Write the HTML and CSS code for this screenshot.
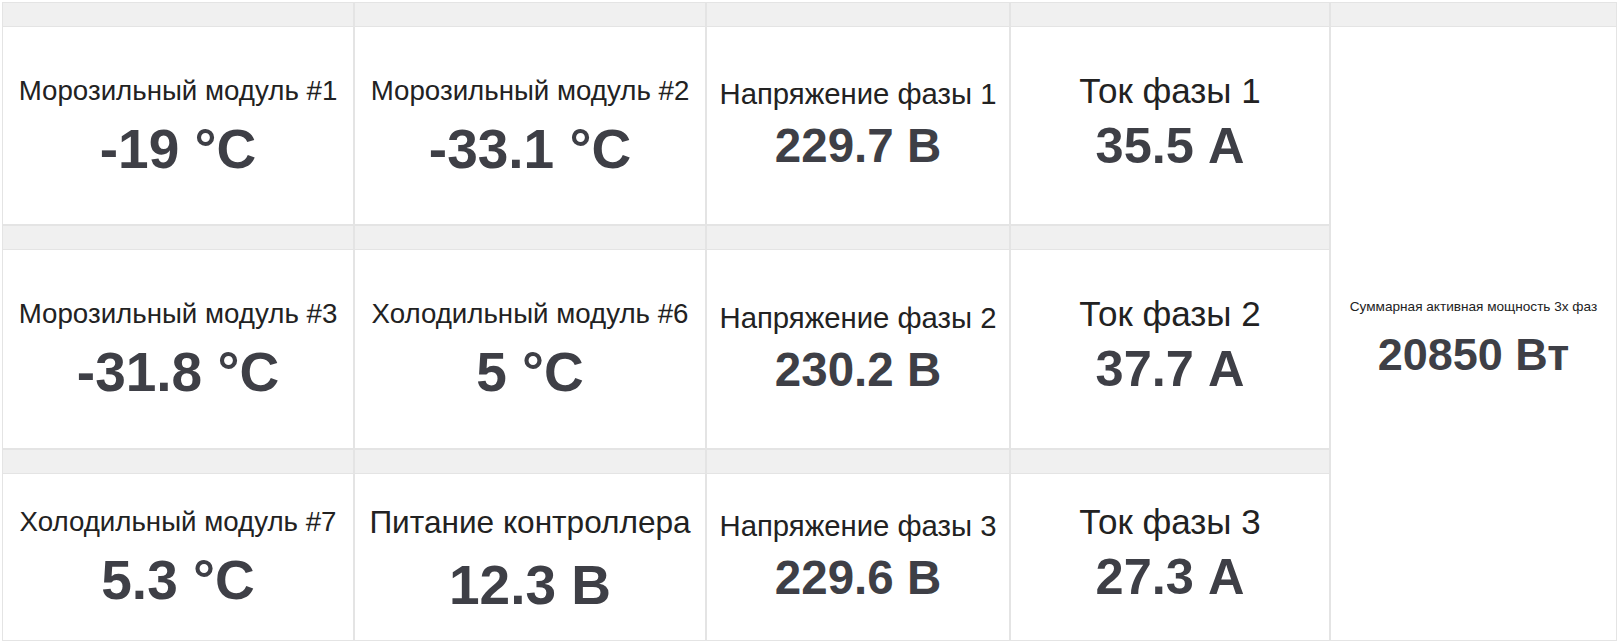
FILE: index.html
```html
<!DOCTYPE html>
<html lang="ru">
<head>
<meta charset="utf-8">
<title>Мониторинг</title>
<link rel="stylesheet" href="styles.css">
</head>
<body>
<div class="board">
  <div class="panel"><div class="panel-head"></div><div class="panel-body"><div class="lbl lbl-md">Морозильный модуль #1</div><div class="val val-xl">-19 °C</div></div></div>
  <div class="panel"><div class="panel-head"></div><div class="panel-body"><div class="lbl lbl-md">Морозильный модуль #2</div><div class="val val-xl">-33.1 °C</div></div></div>
  <div class="panel"><div class="panel-head"></div><div class="panel-body body-ph"><div class="lbl lbl-ph">Напряжение фазы 1</div><div class="val val-md">229.7 В</div></div></div>
  <div class="panel"><div class="panel-head"></div><div class="panel-body body-up"><div class="lbl lbl-lg">Ток фазы 1</div><div class="val val-lg">35.5 А</div></div></div>
  <div class="panel panel-tall"><div class="panel-head"></div><div class="panel-body body-sum"><div class="lbl lbl-sm">Суммарная активная мощность 3х фаз</div><div class="val val-sum">20850 Вт</div></div></div>

  <div class="panel"><div class="panel-head"></div><div class="panel-body"><div class="lbl lbl-md">Морозильный модуль #3</div><div class="val val-xl">-31.8 °C</div></div></div>
  <div class="panel"><div class="panel-head"></div><div class="panel-body"><div class="lbl lbl-md">Холодильный модуль #6</div><div class="val val-xl">5 °C</div></div></div>
  <div class="panel"><div class="panel-head"></div><div class="panel-body body-ph"><div class="lbl lbl-ph">Напряжение фазы 2</div><div class="val val-md">230.2 В</div></div></div>
  <div class="panel"><div class="panel-head"></div><div class="panel-body body-up"><div class="lbl lbl-lg">Ток фазы 2</div><div class="val val-lg">37.7 А</div></div></div>

  <div class="panel"><div class="panel-head"></div><div class="panel-body"><div class="lbl lbl-md">Холодильный модуль #7</div><div class="val val-xl">5.3 °C</div></div></div>
  <div class="panel"><div class="panel-head"></div><div class="panel-body body-pw"><div class="lbl lbl-xl">Питание контроллера</div><div class="val val-xl val-wide">12.3 В</div></div></div>
  <div class="panel"><div class="panel-head"></div><div class="panel-body body-ph"><div class="lbl lbl-ph">Напряжение фазы 3</div><div class="val val-md">229.6 В</div></div></div>
  <div class="panel"><div class="panel-head"></div><div class="panel-body body-up"><div class="lbl lbl-lg">Ток фазы 3</div><div class="val val-lg">27.3 А</div></div></div>
</div>
</body>
</html>
```
FILE: styles.css
```css
html, body {
  margin: 0;
  padding: 0;
  background: #ffffff;
}
body {
  font-family: "Liberation Sans", Arial, sans-serif;
  padding: 2px;
}
.board {
  display: grid;
  grid-template-columns: 352px 352px 304px 320px 287px;
  grid-template-rows: 223px 224px 192px;
}
.panel {
  border: 1px solid #e4e4e4;
  display: flex;
  flex-direction: column;
  background: #ffffff;
  min-width: 0;
}
.panel-tall {
  grid-column: 5;
  grid-row: 1 / span 3;
}
.panel-head {
  height: 23px;
  flex: none;
  background: #f0f0f0;
  border-bottom: 1px solid #e4e4e4;
}
.panel-body {
  flex: 1;
  display: flex;
  flex-direction: column;
  align-items: center;
  justify-content: center;
  text-align: center;
  white-space: nowrap;
  padding-top: 5px;
}
.body-ph {
  padding-top: 0;
  padding-bottom: 0;
}
.body-up {
  padding-top: 0;
  padding-bottom: 5.6px;
}
.body-pw {
  padding-top: 7.4px;
}
.body-sum {
  padding-top: 13.2px;
}
.lbl {
  color: #222222;
  line-height: 1.15;
}
.val {
  color: #3e3f46;
  font-weight: bold;
  line-height: 1.15;
}
.lbl-sm { font-size: 13.6px; }
.lbl-md { font-size: 27.7px; }
.lbl-ph { font-size: 29.3px; }
.lbl-lg { font-size: 35px; }
.lbl-xl { font-size: 31.6px; }
.val-xl { font-size: 55px; margin-top: 11px; }
.val-lg { font-size: 50.5px; margin-top: 5.5px; }
.val-md { font-size: 47.5px; margin-top: 8.4px; }
.val-sum { font-size: 45px; margin-top: 13.9px; }
.val-wide { margin-top: 13.7px; }
```
